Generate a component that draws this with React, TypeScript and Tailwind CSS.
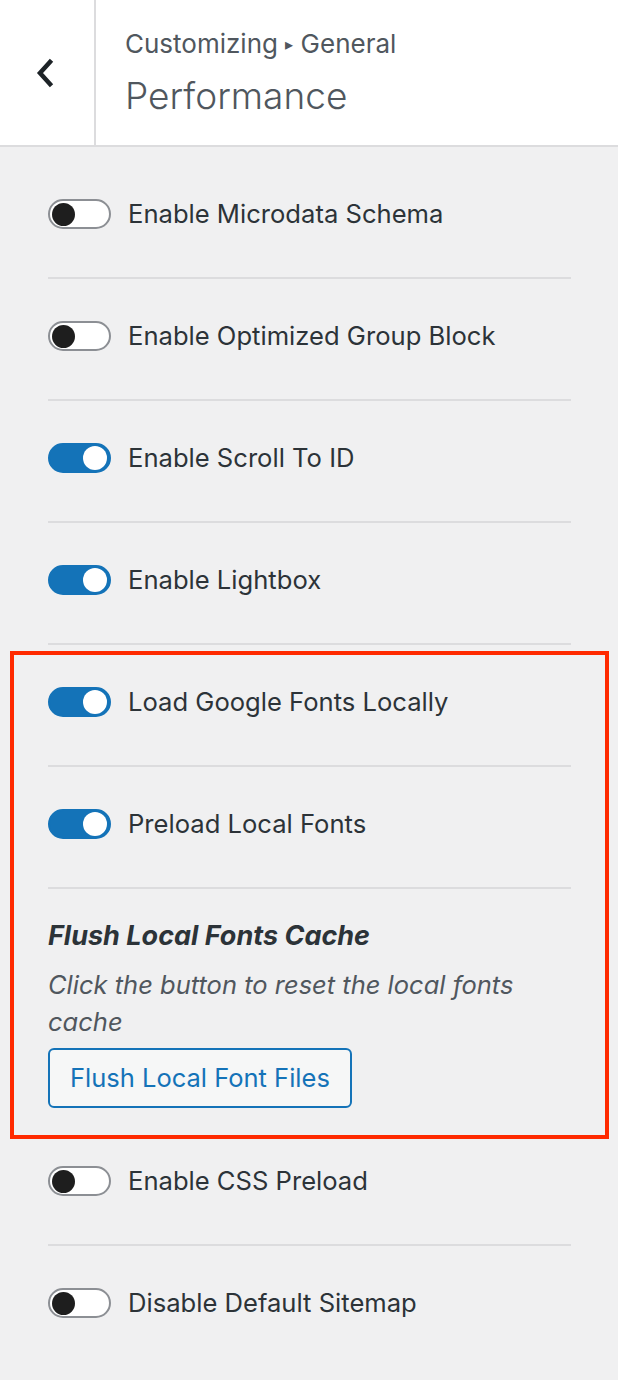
import React from "react";

function Toggle({ on }: { on: boolean }) {
  return on ? (
    <div className="flex h-[30px] w-[63px] shrink-0 items-center justify-end rounded-full border-2 border-[#1473b8] bg-[#1473b8] pr-[2px]">
      <div className="h-[24px] w-[24px] rounded-full bg-white" />
    </div>
  ) : (
    <div className="flex h-[30px] w-[63px] shrink-0 items-center justify-start rounded-full border-2 border-[#8c8f94] bg-white pl-[2px]">
      <div className="h-[23px] w-[23px] rounded-full bg-[#1e1e1e]" />
    </div>
  );
}

function Row({
  label,
  on,
  pt = "pt-[42px]",
  sep = true,
}: {
  label: string;
  on: boolean;
  pt?: string;
  sep?: boolean;
}) {
  return (
    <div className={`${pt} ${sep ? "border-b-2 border-[#dcdcde] pb-[48px]" : "pb-0"}`}>
      <div className="flex items-center gap-[17px]">
        <Toggle on={on} />
        <span className="text-[25.6px] leading-[30px] text-[#2c3338]">{label}</span>
      </div>
    </div>
  );
}

export default function App() {
  return (
    <div
      className="min-h-[1380px] w-[618px] bg-[#f0f0f1]"
      style={{ fontFamily: "Inter, 'Noto Sans', sans-serif" }}
    >
      <header className="flex h-[147px] border-b-2 border-[#dcdcde] bg-white">
        <div className="flex w-[96px] shrink-0 items-center justify-center border-r-2 border-[#dcdcde] pr-[4px]">
          <svg width="22" height="30" viewBox="0 0 22 30" fill="none">
            <path d="M16 4 L6 15 L16 26" stroke="#1d2327" strokeWidth="4.5" strokeLinecap="square" />
          </svg>
        </div>
        <div className="flex flex-col pl-[29px] pt-[27px]">
          <div className="text-[26px] leading-[34px] text-[#50575e]">
            Customizing <span className="text-[16px] align-[3px]">▸</span> General
          </div>
          <div className="mt-[11px] text-[37px] font-light leading-[48px] text-[#50575e]">
            Performance
          </div>
        </div>
      </header>

      <div className="pl-[48px] pr-[47px] pt-[52px]">
        <Row label="Enable Microdata Schema" on={false} pt="pt-0" />
        <Row label="Enable Optimized Group Block" on={false} />
        <Row label="Enable Scroll To ID" on={true} />
        <Row label="Enable Lightbox" on={true} />

        <div className="-mx-[38px] mt-[6px] border-4 border-[#ff2a00] px-[34px] pb-[27px]">
          <Row label="Load Google Fonts Locally" on={true} pt="pt-[32px]" />
          <Row label="Preload Local Fonts" on={true} />
          <div className="pt-[29px]">
            <div className="text-[27px] font-bold italic leading-[36px] text-[#2c3338]">
              Flush Local Fonts Cache
            </div>
            <div className="mt-[12px] text-[25.5px] italic leading-[37px] text-[#50575e]">
              Click the button to reset the local fonts cache
            </div>
            <button className="mt-[8px] h-[60px] rounded-[6px] border-2 border-[#1473b8] bg-[#f6f7f7] px-[20px] text-[25.5px] text-[#1473b8]">
              Flush Local Font Files
            </button>
          </div>
        </div>

        <Row label="Enable CSS Preload" on={false} pt="pt-[27px]" />
        <Row label="Disable Default Sitemap" on={false} sep={false} />
      </div>
    </div>
  );
}
